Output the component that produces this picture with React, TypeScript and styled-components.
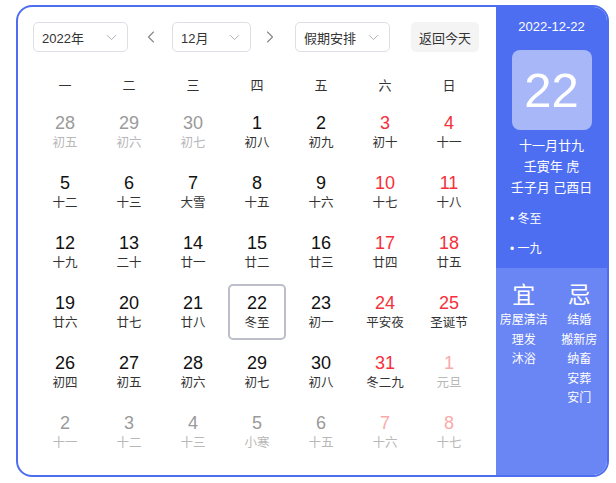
import { createGlobalStyle, styled } from "styled-components";
import { ChevronDown, ChevronLeft, ChevronRight } from "lucide-react";

const GlobalStyle = createGlobalStyle`
  body {
    margin: 0;
    background: #fff;
    font-family: "Liberation Sans", "Noto Sans CJK SC", sans-serif;
  }
`;

type Day = {
  n: number;
  l: string;
  other?: boolean;
  red?: boolean;
  today?: boolean;
};

const weeks: Day[][] = [
  [
    { n: 28, l: "初五", other: true },
    { n: 29, l: "初六", other: true },
    { n: 30, l: "初七", other: true },
    { n: 1, l: "初八" },
    { n: 2, l: "初九" },
    { n: 3, l: "初十", red: true },
    { n: 4, l: "十一", red: true },
  ],
  [
    { n: 5, l: "十二" },
    { n: 6, l: "十三" },
    { n: 7, l: "大雪" },
    { n: 8, l: "十五" },
    { n: 9, l: "十六" },
    { n: 10, l: "十七", red: true },
    { n: 11, l: "十八", red: true },
  ],
  [
    { n: 12, l: "十九" },
    { n: 13, l: "二十" },
    { n: 14, l: "廿一" },
    { n: 15, l: "廿二" },
    { n: 16, l: "廿三" },
    { n: 17, l: "廿四", red: true },
    { n: 18, l: "廿五", red: true },
  ],
  [
    { n: 19, l: "廿六" },
    { n: 20, l: "廿七" },
    { n: 21, l: "廿八" },
    { n: 22, l: "冬至", today: true },
    { n: 23, l: "初一" },
    { n: 24, l: "平安夜", red: true },
    { n: 25, l: "圣诞节", red: true },
  ],
  [
    { n: 26, l: "初四" },
    { n: 27, l: "初五" },
    { n: 28, l: "初六" },
    { n: 29, l: "初七" },
    { n: 30, l: "初八" },
    { n: 31, l: "冬二九", red: true },
    { n: 1, l: "元旦", red: true, other: true },
  ],
  [
    { n: 2, l: "十一", other: true },
    { n: 3, l: "十二", other: true },
    { n: 4, l: "十三", other: true },
    { n: 5, l: "小寒", other: true },
    { n: 6, l: "十五", other: true },
    { n: 7, l: "十六", red: true, other: true },
    { n: 8, l: "十七", red: true, other: true },
  ],
];

const weekdays = ["一", "二", "三", "四", "五", "六", "日"];
const good = ["房屋清洁", "理发", "沐浴"];
const bad = ["结婚", "搬新房", "纳畜", "安葬", "安门"];

const Frame = styled.div`
  margin: 5px 0 0 16px;
  width: 593px;
  height: 472px;
  box-sizing: border-box;
  border: 2px solid #4e6ef2;
  border-radius: 16px;
  overflow: hidden;
  display: flex;
`;

const Main = styled.div`
  flex: 1;
  padding: 15px 0 0 15px;
`;

const Toolbar = styled.div`
  display: flex;
  align-items: center;
  height: 30px;
`;

const Select = styled.div<{ $w: number }>`
  width: ${(p) => p.$w}px;
  height: 30px;
  box-sizing: border-box;
  border: 1px solid #dcdfe6;
  border-radius: 5px;
  display: flex;
  align-items: center;
  justify-content: space-between;
  padding: 0 7px 0 8px;
  font-size: 13px;
  color: #333;
`;

const Arrow = styled.div<{ $ml: number; $mr: number }>`
  width: 20px;
  display: flex;
  justify-content: center;
  margin: 0 ${(p) => p.$mr}px 0 ${(p) => p.$ml}px;
  color: #888;
`;

const TodayBtn = styled.div`
  margin-left: 21px;
  width: 68px;
  height: 30px;
  border-radius: 5px;
  background: #f4f4f5;
  display: flex;
  align-items: center;
  justify-content: center;
  font-size: 13px;
  color: #333;
`;

const Grid = styled.div`
  margin-top: 17px;
  width: 448px;
  display: grid;
  grid-template-columns: repeat(7, 64px);
`;

const WeekDay = styled.div`
  height: 34px;
  display: flex;
  align-items: center;
  justify-content: center;
  padding-bottom: 3px;
  box-sizing: border-box;
  font-size: 13px;
  color: #333;
`;

const Cell = styled.div<{ $today?: boolean }>`
  height: 56px;
  margin: 1px 3px 3px;
  box-sizing: border-box;
  border: 2px solid ${(p) => (p.$today ? "#bcbfca" : "transparent")};
  border-radius: 5px;
  display: flex;
  flex-direction: column;
  align-items: center;
  justify-content: center;
  padding-top: 1px;
`;

const Num = styled.div<{ $red?: boolean; $other?: boolean }>`
  font-size: 18px;
  line-height: 21px;
  color: ${(p) =>
    p.$red ? (p.$other ? "#f8abab" : "#f5303a") : p.$other ? "#9a9a9a" : "#111"};
`;

const Lunar = styled.div<{ $other?: boolean }>`
  font-size: 12.5px;
  line-height: 18px;
  color: ${(p) => (p.$other ? "#b8b8b8" : "#333")};
`;

const Side = styled.div`
  width: 111px;
  display: flex;
  flex-direction: column;
  color: #fff;
`;

const SideTop = styled.div`
  height: 261px;
  background: #4e6ef2;
  padding-top: 10px;
  box-sizing: border-box;
  display: flex;
  flex-direction: column;
  align-items: center;
`;

const DateText = styled.div`
  font-size: 13px;
  line-height: 20px;
`;

const BigDay = styled.div`
  margin-top: 13px;
  width: 80px;
  height: 80px;
  border-radius: 8px;
  background: #a7b7f8;
  display: flex;
  align-items: center;
  justify-content: center;
  font-size: 49px;
`;

const LunarInfo = styled.div`
  margin-top: 5px;
  font-size: 13px;
  line-height: 21px;
  text-align: center;
`;

const Terms = styled.div`
  align-self: stretch;
  padding: 6px 0 0 14px;
  font-size: 12px;
  line-height: 30px;
`;

const SideBottom = styled.div`
  flex: 1;
  background: #6a85f4;
  display: grid;
  grid-template-columns: 1fr 1fr;
  padding-top: 12px;
  align-items: start;
`;

const Col = styled.div`
  display: flex;
  flex-direction: column;
  align-items: center;
  font-size: 12px;
  line-height: 19.6px;
  white-space: nowrap;
`;

const Mark = styled.div`
  font-size: 23px;
  line-height: 30px;
  margin-bottom: 1px;
`;

export default function App() {
  return (
    <>
      <GlobalStyle />
      <Frame>
        <Main>
          <Toolbar>
            <Select $w={95}>
              2022年
              <ChevronDown size={17} color="#a8abb2" strokeWidth={1.3} />
            </Select>
            <Arrow $ml={13} $mr={11}>
              <ChevronLeft size={20} strokeWidth={1.4} />
            </Arrow>
            <Select $w={79}>
              12月
              <ChevronDown size={17} color="#a8abb2" strokeWidth={1.3} />
            </Select>
            <Arrow $ml={9} $mr={15}>
              <ChevronRight size={20} strokeWidth={1.4} />
            </Arrow>
            <Select $w={95}>
              假期安排
              <ChevronDown size={17} color="#a8abb2" strokeWidth={1.3} />
            </Select>
            <TodayBtn>返回今天</TodayBtn>
          </Toolbar>
          <Grid>
            {weekdays.map((w) => (
              <WeekDay key={w}>{w}</WeekDay>
            ))}
            {weeks.flat().map((d, i) => (
              <Cell key={i} $today={d.today}>
                <Num $red={d.red} $other={d.other}>
                  {d.n}
                </Num>
                <Lunar $other={d.other}>{d.l}</Lunar>
              </Cell>
            ))}
          </Grid>
        </Main>
        <Side>
          <SideTop>
            <DateText>2022-12-22</DateText>
            <BigDay>22</BigDay>
            <LunarInfo>
              <div>十一月廿九</div>
              <div>壬寅年 虎</div>
              <div>壬子月 己酉日</div>
            </LunarInfo>
            <Terms>
              <div>• 冬至</div>
              <div>• 一九</div>
            </Terms>
          </SideTop>
          <SideBottom>
            <Col>
              <Mark>宜</Mark>
              {good.map((g) => (
                <div key={g}>{g}</div>
              ))}
            </Col>
            <Col>
              <Mark>忌</Mark>
              {bad.map((b) => (
                <div key={b}>{b}</div>
              ))}
            </Col>
          </SideBottom>
        </Side>
      </Frame>
    </>
  );
}
